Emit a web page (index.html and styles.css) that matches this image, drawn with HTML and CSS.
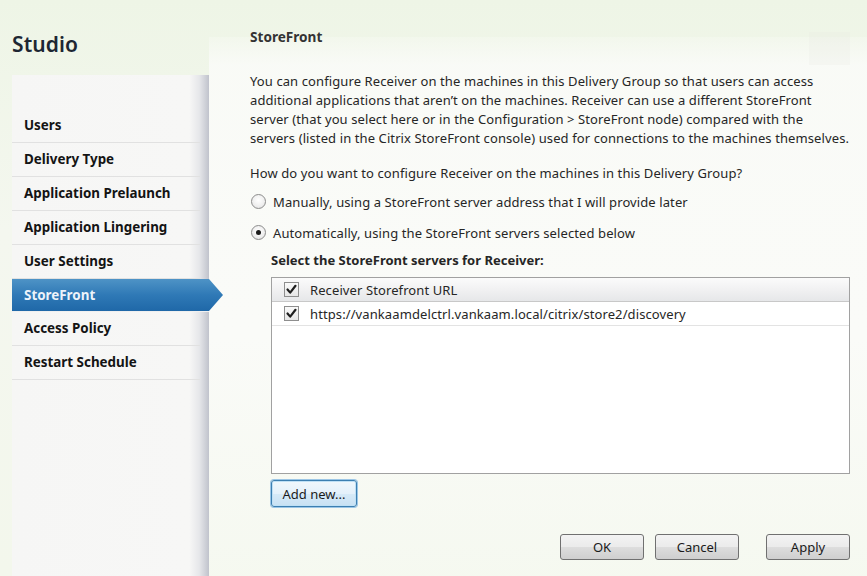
FILE: index.html
```html
<!DOCTYPE html>
<html>
<head>
<meta charset="utf-8">
<link rel="stylesheet" href="styles.css">
</head>
<body>
<div class="app">
  <aside class="side">
    <h1 class="brand">Studio</h1>
    <nav class="steps">
      <div class="step">Users</div>
      <div class="step">Delivery Type</div>
      <div class="step">Application Prelaunch</div>
      <div class="step">Application Lingering</div>
      <div class="step">User Settings</div>
      <div class="step active">StoreFront</div>
      <div class="step">Access Policy</div>
      <div class="step">Restart Schedule</div>
    </nav>
  </aside>
  <main class="content">
    <div class="corner-box"></div>
    <h2 class="title">StoreFront</h2>
    <p class="intro">You can configure Receiver on the machines in this Delivery Group so that users can access<br>additional applications that aren’t on the machines. Receiver can use a different StoreFront<br>server (that you select here or in the Configuration &gt; StoreFront node) compared with the<br>servers (listed in the Citrix StoreFront console) used for connections to the machines themselves.</p>
    <p class="question">How do you want to configure Receiver on the machines in this Delivery Group?</p>
    <div class="radio-row"><span class="radio"></span><span>Manually, using a StoreFront server address that I will provide later</span></div>
    <div class="radio-row"><span class="radio checked"></span><span>Automatically, using the StoreFront servers selected below</span></div>
    <div class="servers">
      <div class="servers-label">Select the StoreFront servers for Receiver:</div>
      <div class="grid">
        <div class="row head"><span class="check"><svg viewBox="0 0 13 13" width="13" height="13"><path d="M2.5 6.5 L5.2 9.6 L10.5 2.8" fill="none" stroke="#1e1e1e" stroke-width="2.2" stroke-linecap="round" stroke-linejoin="round"/></svg></span><span>Receiver Storefront URL</span></div>
        <div class="row"><span class="check"><svg viewBox="0 0 13 13" width="13" height="13"><path d="M2.5 6.5 L5.2 9.6 L10.5 2.8" fill="none" stroke="#1e1e1e" stroke-width="2.2" stroke-linecap="round" stroke-linejoin="round"/></svg></span><span>https://vankaamdelctrl.vankaam.local/citrix/store2/discovery</span></div>
      </div>
      <button class="btn focus">Add new...</button>
    </div>
    <div class="footer">
      <button class="btn wide">OK</button>
      <button class="btn wide">Cancel</button>
      <button class="btn wide apply">Apply</button>
    </div>
  </main>
</div>
</body>
</html>
```
FILE: styles.css
```css
html, body {
  margin: 0;
  padding: 0;
}
body {
  width: 867px;
  height: 576px;
  overflow: hidden;
  font-family: "Noto Sans", "Open Sans", sans-serif;
  color: #262626;
  background: linear-gradient(180deg, #eef5e6 0%, #f4f7ef 40%, #f3f7ec 100%);
}
.app {
  display: grid;
  grid-template-columns: 209px 1fr;
  height: 576px;
}
.side {
  display: flex;
  flex-direction: column;
  padding-left: 12px;
  position: relative;
  z-index: 2;
}
.brand {
  margin: 0;
  height: 75px;
  box-sizing: border-box;
  padding-top: 29px;
  font-size: 21px;
  font-weight: 600;
  color: #1d2633;
  line-height: 30px;
  letter-spacing: 0.1px;
}
.steps {
  flex: 1;
  background: linear-gradient(90deg, #f6f6f5 0%, #f7f7f6 90%, #e6e7ea 95%, #c0c3cc 100%);
  padding-top: 34px;
  padding-right: 9px;
}
.step {
  position: relative;
  height: 33px;
  border-bottom: 1px solid #e1e1e1;
  padding-left: 12px;
  font-size: 13.4px;
  font-weight: 700;
  color: #141414;
  line-height: 33px;
}
.step.active {
  margin-right: -9px;
  height: 32px;
  line-height: 32px;
  border-bottom: 1px solid #f0f0f0;
  color: #ecf3fa;
  background: linear-gradient(180deg, #4e93c6 0%, #2f79b6 50%, #1f68a8 100%);
}
.step.active::after {
  content: "";
  position: absolute;
  right: -14px;
  top: 0;
  width: 14px;
  height: 32px;
  background: linear-gradient(180deg, #4e93c6 0%, #2f79b6 50%, #1f68a8 100%);
  clip-path: polygon(0 0, 100% 50%, 0 100%);
}
.content {
  position: relative;
  z-index: 1;
  margin-top: 37px;
  padding: 0 17px 0 41px;
  background: linear-gradient(180deg, rgba(250,251,247,0.3) 0px, rgba(250,251,248,0.9) 28px, #fafbf8 300px, rgba(246,249,241,0.8) 100%);
  display: flex;
  flex-direction: column;
}
.corner-box {
  position: absolute;
  top: -5px;
  right: 17px;
  width: 41px;
  height: 33px;
  background: rgba(228,232,225,0.2);
}
.title {
  margin: 0;
  font-size: 13.6px;
  font-weight: 700;
  color: #333;
  line-height: 0;
  height: 0;
}
.intro {
  margin: 35px 0 0;
  font-size: 13px;
  line-height: 19px;
  letter-spacing: 0.1px;
  color: #262626;
  white-space: nowrap;
}
.question {
  margin: 16px 0 0;
  font-size: 13px;
  line-height: 19px;
  letter-spacing: 0.1px;
}
.radio-row {
  display: flex;
  align-items: center;
  gap: 7px;
  height: 31px;
  margin-left: 1px;
  font-size: 13px;
  letter-spacing: 0.1px;
}
.question + .radio-row {
  margin-top: 3px;
}
.radio {
  width: 13px;
  height: 13px;
  border: 1px solid #8c8c8c;
  border-radius: 50%;
  background: radial-gradient(circle at 50% 40%, #ffffff 0%, #eeeeee 60%, #d8d8d8 100%);
  display: flex;
  align-items: center;
  justify-content: center;
}
.radio.checked::after {
  content: "";
  width: 5px;
  height: 5px;
  border-radius: 50%;
  background: #1b1b1b;
}
.servers {
  margin-left: 21px;
  display: flex;
  flex-direction: column;
  align-items: flex-start;
}
.servers-label {
  margin-top: 3px;
  height: 26px;
  font-size: 13px;
  font-weight: 700;
  color: #262626;
  line-height: 19px;
}
.grid {
  align-self: stretch;
  height: 195px;
  border: 1px solid #a1a1a1;
  background: #fff;
}
.row {
  display: flex;
  align-items: center;
  gap: 11px;
  height: 23px;
  padding-left: 12px;
  border-bottom: 1px solid #e3e3e3;
  font-size: 13px;
  letter-spacing: 0.1px;
  color: #262626;
}
.row.head {
  background: linear-gradient(180deg, #fbfbfb 0%, #f1f1f2 50%, #e6e7e9 100%);
  border-bottom: 1px solid #c8c8c8;
}
.check {
  display: block;
  width: 13px;
  height: 13px;
  border: 1px solid #8e8e8e;
  background: linear-gradient(180deg, #fafafa, #e6e6e6);
  box-sizing: content-box;
}
.check svg {
  display: block;
}
.btn {
  font-family: "Noto Sans", "Open Sans", sans-serif;
  font-size: 13px;
  color: #1a1a1a;
  height: 26px;
  padding: 0 10px;
  border: 1px solid #707070;
  border-radius: 3px;
  background: linear-gradient(180deg, #f3f3f3 0%, #ebebeb 50%, #dddddd 51%, #cfcfcf 100%);
}
.btn.focus {
  margin-top: 6px;
  height: 27px;
  border-color: #3c7fb1;
  box-shadow: 0 0 0 1px #9cc6e6, inset 0 0 0 1px #bfe0f5;
  background: linear-gradient(180deg, #f0f7fc 0%, #e4f1fb 50%, #d6eaf8 51%, #c8e1f3 100%);
  width: 86px;
}
.footer {
  margin-top: 27px;
  display: flex;
  justify-content: flex-end;
  gap: 11px;
}
.btn.wide {
  width: 84px;
  height: 26px;
}
.btn.apply {
  margin-left: 16px;
}
```
